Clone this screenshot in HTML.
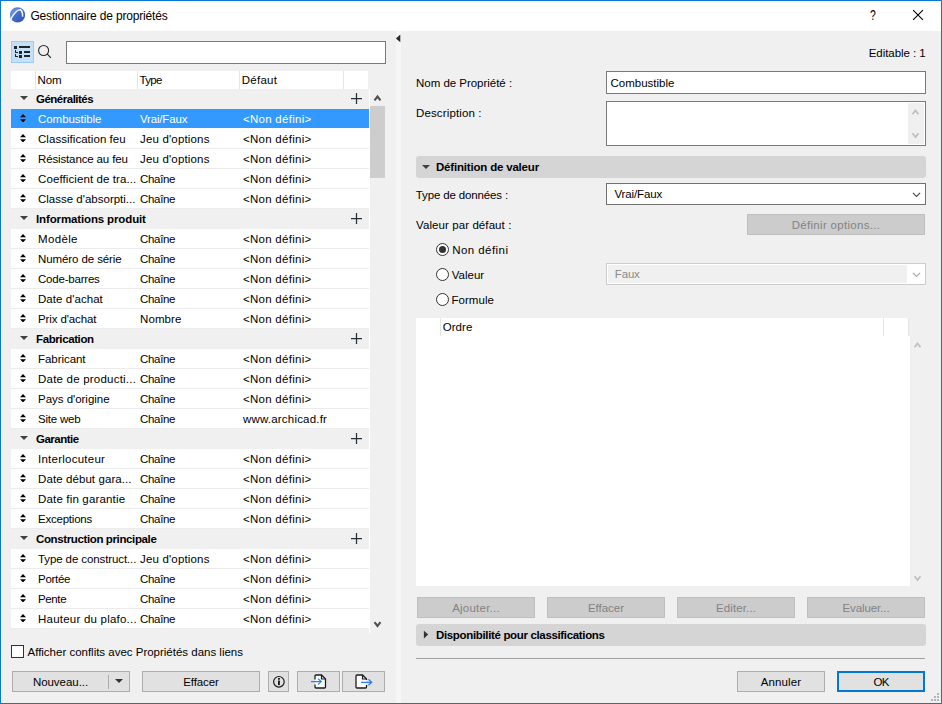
<!DOCTYPE html>
<html lang="fr">
<head>
<meta charset="utf-8">
<title>Gestionnaire de propriétés</title>
<style>
*{box-sizing:border-box;margin:0;padding:0}
html,body{width:942px;height:704px;overflow:hidden;background:#f0f0f0}
body{font-family:"Liberation Sans",sans-serif;font-size:11.5px;color:#000;position:relative}
#win *{position:absolute}
#win{position:absolute;left:0;top:0;width:942px;height:704px;background:#f0f0f0;overflow:hidden}
#frame{left:0;top:0;width:942px;height:704px;border:1px solid #0a78d7;z-index:9}
#title{left:1px;top:1px;width:940px;height:30px;background:#fff}
.lbl{white-space:nowrap;font-size:11.5px;line-height:14px}
.inp{background:#fff;border:1px solid #7a7a7a}
.btn{background:#e1e1e1;border:1px solid #adadad;text-align:center;font-size:11.5px;line-height:21px;white-space:nowrap;height:21px}
.btn.dis{background:#cccccc;border-color:#bfbfbf;color:#838383}
.sec{background:#d5d5d5;border-radius:3px;height:22px;left:416px;width:510px}
.sec b{left:20px;top:4px;font-size:11.5px;white-space:nowrap;line-height:14px}
/* table */
#hdr{left:11px;top:71px;width:357px;height:18px;background:#fff}
#hdr span{top:2px;font-size:11.5px;line-height:14px;white-space:nowrap}
#hdr i{top:0;width:1px;height:18px;background:#e5e5e5}
.row,.grow{left:11px;width:358px;height:20px;white-space:nowrap}
.row{background:#fff}
.row::after{content:"";position:absolute;left:0;bottom:0;width:358px;height:1px;background:#ececec}
.row.sel{background:#fff linear-gradient(#3399ff,#3399ff) no-repeat;background-size:358px 19px;color:#fff}
.row.sel::after{background:#fff}
.grow{background:#f0f0f0}
.grow b{left:25px;top:3px;line-height:14px;font-size:11.5px}
.tri{left:9px;top:7px;width:0;height:0;border-left:4px solid transparent;border-right:4px solid transparent;border-top:4.5px solid #404040}
.plus{left:340px;top:4px;width:11px;height:11px}
.ud{left:9.4px;top:4.8px;width:6px;height:8.5px}
.row span{top:3px;line-height:14px;font-size:11.5px}
.c1{left:27px}.c2{left:129px}.c3{left:232px}
.radio{width:13px;height:13px;border:1px solid #333;border-radius:50%;background:#fff}
.radio.on::after{content:"";position:absolute;left:2px;top:2px;width:7px;height:7px;border-radius:50%;background:#333}
.gd{width:2px;height:2px;background:#b4b4b4}
</style>
</head>
<body>
<div id="win">
  <div id="frame"></div>
  <div id="title">
    <svg style="left:8px;top:6px;width:17px;height:17px" viewBox="0 0 17 17"><defs><linearGradient id="g" x1="0" y1="0" x2="1" y2="1"><stop offset="0" stop-color="#5a86e6"/><stop offset="1" stop-color="#2a4fae"/></linearGradient></defs><circle cx="8.55" cy="7.9" r="7.6" fill="url(#g)"/><path d="M1 13.8C3.5 7.5 8 2.8 11.3 2.6C13 4 13.8 6.5 13.6 9.6" fill="none" stroke="#fff" stroke-width="1.5"/><path d="M1.2 12.5C3.5 7 8 2.6 11.3 2.6L9 1.2C5 1 1.5 4.5 1 8.5z" fill="#7ea4f0" opacity=".45"/></svg>
    <div class="lbl" style="left:29.4px;top:8px;font-size:12px"><span style="position:static;letter-spacing:-0.16px">Gestionnaire de propriétés</span></div>
    <div style="left:862px;top:6px;font-size:14px;line-height:16px;width:20px;text-align:center;transform:scaleX(0.74);transform-origin:50% 50%">?</div>
    <svg style="left:911px;top:8px;width:12px;height:12px" viewBox="0 0 12 12"><path d="M1.1 1.1L10.9 10.9M10.9 1.1L1.1 10.9" stroke="#000" stroke-width="1.1" fill="none"/></svg>
  </div>

  <!-- left toolbar -->
  <div style="left:11px;top:41px;width:23px;height:22px;background:#c5dff4;border:1px solid #9ccbf3"></div>
  <svg style="left:14px;top:46px;width:17px;height:12px" viewBox="0 0 17 12" shape-rendering="crispEdges"><g fill="#1d262b"><rect x="0" y="0" width="3" height="3"/><rect x="5" y="0" width="11" height="2"/><rect x="5" y="5" width="3" height="3"/><rect x="10" y="5" width="6" height="2"/><rect x="5" y="9" width="3" height="3"/><rect x="10" y="9" width="6" height="2"/><rect x="1" y="4" width="1" height="3"/><rect x="1" y="6" width="3" height="1"/><rect x="1" y="8" width="1" height="3"/><rect x="1" y="10" width="3" height="1"/></g></svg>
  <svg style="left:37px;top:44px;width:16px;height:16px" viewBox="0 0 16 16"><circle cx="6.6" cy="6.5" r="5" fill="none" stroke="#222c31" stroke-width="1.1"/><path d="M10.3 10.2l3.6 3.7" stroke="#222c31" stroke-width="1.2"/></svg>
  <div class="inp" style="left:66px;top:41px;width:320px;height:23px"></div>

  <!-- table -->
  <div id="hdr">
    <i style="left:24px"></i><i style="left:126px"></i><i style="left:228px"></i><i style="left:332px"></i>
    <span style="left:26.6px"><span style="position:static;letter-spacing:-0.1px">Nom</span></span><span style="left:128.6px"><span style="position:static;letter-spacing:-0.75px">Type</span></span><span style="left:230.7px"><span style="position:static;letter-spacing:0.28px">Défaut</span></span>
  </div>
<div class="grow" style="top:89px"><i class="tri"></i><b><span style="position:static;letter-spacing:-0.5px">Généralités</span></b><svg class="plus" viewBox="0 0 11 11"><path d="M5.5 0v11M0 5.5h11" stroke="#263238" stroke-width="1.25" fill="none"/></svg></div>
<div class="row sel" style="top:109px"><svg class="ud" viewBox="0 0 6 8.5"><path d="M3 0L6 3.2H0zM3 8.5L6 5.3H0z" fill="#000"/></svg><span class="c1"><span style="position:static;letter-spacing:-0.04px">Combustible</span></span><span class="c2"><span style="position:static;letter-spacing:-0.175px">Vrai/Faux</span></span><span class="c3"><span style="position:static;letter-spacing:0.273px">&lt;Non défini&gt;</span></span></div>
<div class="row" style="top:129px"><svg class="ud" viewBox="0 0 6 8.5"><path d="M3 0L6 3.2H0zM3 8.5L6 5.3H0z" fill="#000"/></svg><span class="c1"><span style="position:static;letter-spacing:0.041px">Classification feu</span></span><span class="c2"><span style="position:static;letter-spacing:0.167px">Jeu d'options</span></span><span class="c3"><span style="position:static;letter-spacing:0.273px">&lt;Non défini&gt;</span></span></div>
<div class="row" style="top:149px"><svg class="ud" viewBox="0 0 6 8.5"><path d="M3 0L6 3.2H0zM3 8.5L6 5.3H0z" fill="#000"/></svg><span class="c1"><span style="position:static;letter-spacing:-0.138px">Résistance au feu</span></span><span class="c2"><span style="position:static;letter-spacing:0.167px">Jeu d'options</span></span><span class="c3"><span style="position:static;letter-spacing:0.273px">&lt;Non défini&gt;</span></span></div>
<div class="row" style="top:169px"><svg class="ud" viewBox="0 0 6 8.5"><path d="M3 0L6 3.2H0zM3 8.5L6 5.3H0z" fill="#000"/></svg><span class="c1"><span style="position:static;letter-spacing:0.1px">Coefficient de tra...</span></span><span class="c2"><span style="position:static;letter-spacing:-0.32px">Chaîne</span></span><span class="c3"><span style="position:static;letter-spacing:0.273px">&lt;Non défini&gt;</span></span></div>
<div class="row" style="top:189px"><svg class="ud" viewBox="0 0 6 8.5"><path d="M3 0L6 3.2H0zM3 8.5L6 5.3H0z" fill="#000"/></svg><span class="c1"><span style="position:static;letter-spacing:0.0px">Classe d'absorpti...</span></span><span class="c2"><span style="position:static;letter-spacing:-0.32px">Chaîne</span></span><span class="c3"><span style="position:static;letter-spacing:0.273px">&lt;Non défini&gt;</span></span></div>
<div class="grow" style="top:209px"><i class="tri"></i><b><span style="position:static;letter-spacing:-0.132px">Informations produit</span></b><svg class="plus" viewBox="0 0 11 11"><path d="M5.5 0v11M0 5.5h11" stroke="#263238" stroke-width="1.25" fill="none"/></svg></div>
<div class="row" style="top:229px"><svg class="ud" viewBox="0 0 6 8.5"><path d="M3 0L6 3.2H0zM3 8.5L6 5.3H0z" fill="#000"/></svg><span class="c1"><span style="position:static;letter-spacing:0.36px">Modèle</span></span><span class="c2"><span style="position:static;letter-spacing:-0.32px">Chaîne</span></span><span class="c3"><span style="position:static;letter-spacing:0.273px">&lt;Non défini&gt;</span></span></div>
<div class="row" style="top:249px"><svg class="ud" viewBox="0 0 6 8.5"><path d="M3 0L6 3.2H0zM3 8.5L6 5.3H0z" fill="#000"/></svg><span class="c1"><span style="position:static;letter-spacing:-0.093px">Numéro de série</span></span><span class="c2"><span style="position:static;letter-spacing:-0.32px">Chaîne</span></span><span class="c3"><span style="position:static;letter-spacing:0.273px">&lt;Non défini&gt;</span></span></div>
<div class="row" style="top:269px"><svg class="ud" viewBox="0 0 6 8.5"><path d="M3 0L6 3.2H0zM3 8.5L6 5.3H0z" fill="#000"/></svg><span class="c1"><span style="position:static;letter-spacing:-0.21px">Code-barres</span></span><span class="c2"><span style="position:static;letter-spacing:-0.32px">Chaîne</span></span><span class="c3"><span style="position:static;letter-spacing:0.273px">&lt;Non défini&gt;</span></span></div>
<div class="row" style="top:289px"><svg class="ud" viewBox="0 0 6 8.5"><path d="M3 0L6 3.2H0zM3 8.5L6 5.3H0z" fill="#000"/></svg><span class="c1"><span style="position:static;letter-spacing:0.055px">Date d'achat</span></span><span class="c2"><span style="position:static;letter-spacing:-0.32px">Chaîne</span></span><span class="c3"><span style="position:static;letter-spacing:0.273px">&lt;Non défini&gt;</span></span></div>
<div class="row" style="top:309px"><svg class="ud" viewBox="0 0 6 8.5"><path d="M3 0L6 3.2H0zM3 8.5L6 5.3H0z" fill="#000"/></svg><span class="c1"><span style="position:static;letter-spacing:-0.109px">Prix d'achat</span></span><span class="c2"><span style="position:static;letter-spacing:0.1px">Nombre</span></span><span class="c3"><span style="position:static;letter-spacing:0.273px">&lt;Non défini&gt;</span></span></div>
<div class="grow" style="top:329px"><i class="tri"></i><b><span style="position:static;letter-spacing:-0.39px">Fabrication</span></b><svg class="plus" viewBox="0 0 11 11"><path d="M5.5 0v11M0 5.5h11" stroke="#263238" stroke-width="1.25" fill="none"/></svg></div>
<div class="row" style="top:349px"><svg class="ud" viewBox="0 0 6 8.5"><path d="M3 0L6 3.2H0zM3 8.5L6 5.3H0z" fill="#000"/></svg><span class="c1"><span style="position:static;letter-spacing:-0.05px">Fabricant</span></span><span class="c2"><span style="position:static;letter-spacing:-0.32px">Chaîne</span></span><span class="c3"><span style="position:static;letter-spacing:0.273px">&lt;Non défini&gt;</span></span></div>
<div class="row" style="top:369px"><svg class="ud" viewBox="0 0 6 8.5"><path d="M3 0L6 3.2H0zM3 8.5L6 5.3H0z" fill="#000"/></svg><span class="c1"><span style="position:static;letter-spacing:0.217px">Date de producti...</span></span><span class="c2"><span style="position:static;letter-spacing:-0.32px">Chaîne</span></span><span class="c3"><span style="position:static;letter-spacing:0.273px">&lt;Non défini&gt;</span></span></div>
<div class="row" style="top:389px"><svg class="ud" viewBox="0 0 6 8.5"><path d="M3 0L6 3.2H0zM3 8.5L6 5.3H0z" fill="#000"/></svg><span class="c1"><span style="position:static;letter-spacing:-0.023px">Pays d'origine</span></span><span class="c2"><span style="position:static;letter-spacing:-0.32px">Chaîne</span></span><span class="c3"><span style="position:static;letter-spacing:0.273px">&lt;Non défini&gt;</span></span></div>
<div class="row" style="top:409px"><svg class="ud" viewBox="0 0 6 8.5"><path d="M3 0L6 3.2H0zM3 8.5L6 5.3H0z" fill="#000"/></svg><span class="c1"><span style="position:static;letter-spacing:-0.214px">Site web</span></span><span class="c2"><span style="position:static;letter-spacing:-0.32px">Chaîne</span></span><span class="c3"><span style="position:static;letter-spacing:0.193px">www.archicad.fr</span></span></div>
<div class="grow" style="top:429px"><i class="tri"></i><b><span style="position:static;letter-spacing:-0.5px">Garantie</span></b><svg class="plus" viewBox="0 0 11 11"><path d="M5.5 0v11M0 5.5h11" stroke="#263238" stroke-width="1.25" fill="none"/></svg></div>
<div class="row" style="top:449px"><svg class="ud" viewBox="0 0 6 8.5"><path d="M3 0L6 3.2H0zM3 8.5L6 5.3H0z" fill="#000"/></svg><span class="c1"><span style="position:static;letter-spacing:0.25px">Interlocuteur</span></span><span class="c2"><span style="position:static;letter-spacing:-0.32px">Chaîne</span></span><span class="c3"><span style="position:static;letter-spacing:0.273px">&lt;Non défini&gt;</span></span></div>
<div class="row" style="top:469px"><svg class="ud" viewBox="0 0 6 8.5"><path d="M3 0L6 3.2H0zM3 8.5L6 5.3H0z" fill="#000"/></svg><span class="c1"><span style="position:static;letter-spacing:0.088px">Date début gara...</span></span><span class="c2"><span style="position:static;letter-spacing:-0.32px">Chaîne</span></span><span class="c3"><span style="position:static;letter-spacing:0.273px">&lt;Non défini&gt;</span></span></div>
<div class="row" style="top:489px"><svg class="ud" viewBox="0 0 6 8.5"><path d="M3 0L6 3.2H0zM3 8.5L6 5.3H0z" fill="#000"/></svg><span class="c1"><span style="position:static;letter-spacing:0.169px">Date fin garantie</span></span><span class="c2"><span style="position:static;letter-spacing:-0.32px">Chaîne</span></span><span class="c3"><span style="position:static;letter-spacing:0.273px">&lt;Non défini&gt;</span></span></div>
<div class="row" style="top:509px"><svg class="ud" viewBox="0 0 6 8.5"><path d="M3 0L6 3.2H0zM3 8.5L6 5.3H0z" fill="#000"/></svg><span class="c1"><span style="position:static;letter-spacing:-0.222px">Exceptions</span></span><span class="c2"><span style="position:static;letter-spacing:-0.32px">Chaîne</span></span><span class="c3"><span style="position:static;letter-spacing:0.273px">&lt;Non défini&gt;</span></span></div>
<div class="grow" style="top:529px"><i class="tri"></i><b><span style="position:static;letter-spacing:-0.377px">Construction principale</span></b><svg class="plus" viewBox="0 0 11 11"><path d="M5.5 0v11M0 5.5h11" stroke="#263238" stroke-width="1.25" fill="none"/></svg></div>
<div class="row" style="top:549px"><svg class="ud" viewBox="0 0 6 8.5"><path d="M3 0L6 3.2H0zM3 8.5L6 5.3H0z" fill="#000"/></svg><span class="c1"><span style="position:static;letter-spacing:-0.105px">Type de construct...</span></span><span class="c2"><span style="position:static;letter-spacing:0.167px">Jeu d'options</span></span><span class="c3"><span style="position:static;letter-spacing:0.273px">&lt;Non défini&gt;</span></span></div>
<div class="row" style="top:569px"><svg class="ud" viewBox="0 0 6 8.5"><path d="M3 0L6 3.2H0zM3 8.5L6 5.3H0z" fill="#000"/></svg><span class="c1"><span style="position:static;letter-spacing:-0.28px">Portée</span></span><span class="c2"><span style="position:static;letter-spacing:-0.32px">Chaîne</span></span><span class="c3"><span style="position:static;letter-spacing:0.273px">&lt;Non défini&gt;</span></span></div>
<div class="row" style="top:589px"><svg class="ud" viewBox="0 0 6 8.5"><path d="M3 0L6 3.2H0zM3 8.5L6 5.3H0z" fill="#000"/></svg><span class="c1"><span style="position:static;letter-spacing:-0.375px">Pente</span></span><span class="c2"><span style="position:static;letter-spacing:-0.32px">Chaîne</span></span><span class="c3"><span style="position:static;letter-spacing:0.273px">&lt;Non défini&gt;</span></span></div>
<div class="row" style="top:609px"><svg class="ud" viewBox="0 0 6 8.5"><path d="M3 0L6 3.2H0zM3 8.5L6 5.3H0z" fill="#000"/></svg><span class="c1"><span style="position:static;letter-spacing:0.222px">Hauteur du plafo...</span></span><span class="c2"><span style="position:static;letter-spacing:-0.32px">Chaîne</span></span><span class="c3"><span style="position:static;letter-spacing:0.273px">&lt;Non défini&gt;</span></span></div>
  <div style="left:369px;top:89px;width:1px;height:544px;background:#fff"></div>
  <!-- left scrollbar -->
  <div style="left:370px;top:89px;width:16px;height:542px;background:#f0f0f0"></div>
  <div style="left:370px;top:106px;width:15px;height:72px;background:#cdcdcd"></div>
  <svg style="left:373px;top:94px;width:9px;height:7px" viewBox="0 0 9 7"><path d="M1.5 6.3L4.5 2.5L7.5 6.3" stroke="#505050" stroke-width="2.1" fill="none"/></svg>
  <svg style="left:373px;top:621.3px;width:9px;height:7px" viewBox="0 0 9 7"><path d="M1.5 1.2L4.5 5L7.5 1.2" stroke="#505050" stroke-width="2.1" fill="none"/></svg>

  <!-- checkbox -->
  <div style="left:11px;top:645px;width:13px;height:13px;background:#fff;border:1px solid #333"></div>
  <div class="lbl" style="left:27.5px;top:645px"><span style="position:static;letter-spacing:-0.009px">Afficher conflits avec Propriétés dans liens</span></div>

  <!-- left buttons -->
  <div class="btn" style="left:12px;top:671px;width:118px"><span style="left:0;top:0;width:95px;text-align:center"><span style="position:static;letter-spacing:-0.044px">Nouveau...</span></span><i style="left:95px;top:3px;width:1px;height:14px;background:#adadad"></i><i style="left:102px;top:7px;width:0;height:0;border-left:4px solid transparent;border-right:4px solid transparent;border-top:4px solid #333"></i></div>
  <div class="btn" style="left:142px;top:671px;width:118px"><span style="position:static;letter-spacing:-0.1px">Effacer</span></div>
  <div class="btn" style="left:268px;top:671px;width:21px"><svg style="left:0;top:0;width:19px;height:19px" viewBox="0 0 19 19"><circle cx="9.9" cy="9.8" r="5.3" fill="none" stroke="#1c1c1c" stroke-width="1.2"/><rect x="9" y="8.5" width="1.9" height="4.6" fill="#1c1c1c"/><rect x="9" y="6" width="1.9" height="1.7" fill="#1c1c1c"/></svg></div>
  <div class="btn" style="left:297px;top:671px;width:43px"><svg style="left:0;top:0;width:41px;height:19px" viewBox="0 0 41 19"><path d="M17 7.5V4Q17 3 18 3H23.5L27.5 7V15Q27.5 16 26.5 16H18Q17 16 17 15V12.5" fill="#fff" stroke="#1c1c1c" stroke-width="1.3"/><path d="M23.5 3V7H27.5" fill="none" stroke="#1c1c1c" stroke-width="1.2"/><path d="M13 9.6H23M20 6.6L23.2 9.6L20 12.6" fill="none" stroke="#2b7cf0" stroke-width="1.2"/></svg></div>
  <div class="btn" style="left:342px;top:671px;width:43px"><svg style="left:0;top:0;width:41px;height:19px" viewBox="0 0 41 19"><path d="M23.5 8V7L19.5 3H14Q13 3 13 4V15Q13 16 14 16H22.5Q23.5 16 23.5 15V13" fill="#fff" stroke="#1c1c1c" stroke-width="1.3"/><path d="M19.5 3V7H23.5" fill="none" stroke="#1c1c1c" stroke-width="1.2"/><path d="M18 10.3H28.5M25.5 7.3L28.7 10.3L25.5 13.3" fill="none" stroke="#2b7cf0" stroke-width="1.2"/></svg></div>

  <!-- splitter -->
  <div style="left:396px;top:31px;width:5px;height:672px;background:#f6f6f6"></div>
  <svg style="left:395px;top:34px;width:6px;height:9px" viewBox="0 0 6 9"><path d="M0.9 4.4L5.3 0.6V8.2z" fill="#2b2b2b"/></svg>

  <!-- right panel -->
  <div class="lbl" style="right:16.3px;top:46px"><span style="position:static;letter-spacing:-0.045px">Editable : 1</span></div>
  <div class="lbl" style="left:416px;top:76px"><span style="position:static;letter-spacing:-0.024px">Nom de Propriété :</span></div>
  <div class="inp" style="left:606px;top:71px;width:320px;height:23px"><span class="lbl" style="left:3.5px;top:4px"><span style="position:static;letter-spacing:0.0px">Combustible</span></span></div>
  <div class="lbl" style="left:416px;top:106px"><span style="position:static;letter-spacing:0.133px">Description :</span></div>
  <div class="inp" style="left:606px;top:101px;width:320px;height:45px">
    <div style="right:1px;top:1px;width:16px;height:41px;background:#f0f0f0"></div>
    <svg style="right:5px;top:6px;width:9px;height:7px" viewBox="0 0 9 7"><path d="M1.5 6.3L4.5 2.5L7.5 6.3" stroke="#bfbfbf" stroke-width="1.8" fill="none"/></svg>
    <svg style="right:5px;top:30.2px;width:9px;height:7px" viewBox="0 0 9 7"><path d="M1.5 1.2L4.5 5L7.5 1.2" stroke="#bfbfbf" stroke-width="1.8" fill="none"/></svg>
  </div>

  <div class="sec" style="top:156px"><i class="tri" style="left:6px;top:9px;border-top-width:4px"></i><b><span style="position:static;letter-spacing:-0.189px">Définition de valeur</span></b></div>

  <div class="lbl" style="left:415.8px;top:188px"><span style="position:static;letter-spacing:-0.138px">Type de données :</span></div>
  <div class="inp" style="left:606px;top:183px;width:320px;height:22px;border-color:#707070"><span class="lbl" style="left:7.4px;top:3px"><span style="position:static;letter-spacing:-0.125px">Vrai/Faux</span></span>
    <svg style="left:305.4px;top:8px;width:9px;height:6px" viewBox="0 0 9 6"><path d="M0.9 0.9L4.5 4.5L8.1 0.9" stroke="#4a4a4a" stroke-width="1.15" fill="none"/></svg></div>

  <div class="lbl" style="left:416px;top:218px"><span style="position:static;letter-spacing:0.089px">Valeur par défaut :</span></div>
  <div class="btn dis" style="left:747px;top:214px;width:178px"><span style="position:static;letter-spacing:0.306px">Définir options...</span></div>

  <div class="radio on" style="left:436px;top:243px"></div><div class="lbl" style="left:452.2px;top:243px"><span style="position:static;letter-spacing:0.444px">Non défini</span></div>
  <div class="radio" style="left:436px;top:268px"></div><div class="lbl" style="left:451.8px;top:268px"><span style="position:static;letter-spacing:0.0px">Valeur</span></div>
  <div class="radio" style="left:436px;top:293px"></div><div class="lbl" style="left:451.5px;top:293px"><span style="position:static;letter-spacing:0.033px">Formule</span></div>

  <div style="left:606px;top:263px;width:320px;height:22px;background:#fff;border:1px solid #cccccc">
    <div style="left:1px;top:1px;width:299px;height:18px;background:#f0f0f0"></div>
    <span class="lbl" style="left:7.8px;top:3px;color:#8a8a8a"><span style="position:static;letter-spacing:-0.167px">Faux</span></span>
    <svg style="left:305.4px;top:8px;width:9px;height:6px" viewBox="0 0 9 6"><path d="M0.9 0.9L4.5 4.5L8.1 0.9" stroke="#a6a6a6" stroke-width="1.15" fill="none"/></svg></div>

  <!-- order list -->
  <div style="left:416px;top:336px;width:494px;height:250px;background:#fff"></div>
  <div style="left:416px;top:318px;width:493px;height:18px;background:#fff">
    <i style="left:24px;top:0;width:1px;height:18px;background:#e5e5e5"></i><i style="left:467px;top:0;width:1px;height:18px;background:#e5e5e5"></i><i style="left:492px;top:0;width:1px;height:18px;background:#e5e5e5"></i>
    <span class="lbl" style="left:26.7px;top:2px"><span style="position:static;letter-spacing:0.075px">Ordre</span></span></div>
  <svg style="left:913px;top:341px;width:9px;height:7px" viewBox="0 0 9 7"><path d="M1.5 6.3L4.5 2.5L7.5 6.3" stroke="#bfbfbf" stroke-width="1.8" fill="none"/></svg>
  <svg style="left:913px;top:574.5px;width:9px;height:7px" viewBox="0 0 9 7"><path d="M1.5 1.2L4.5 5L7.5 1.2" stroke="#bfbfbf" stroke-width="1.8" fill="none"/></svg>

  <div class="btn dis" style="left:417px;top:597px;width:118px"><span style="position:static;letter-spacing:0.222px">Ajouter...</span></div>
  <div class="btn dis" style="left:547px;top:597px;width:118px"><span style="position:static;letter-spacing:0.0px">Effacer</span></div>
  <div class="btn dis" style="left:677px;top:597px;width:118px"><span style="position:static;letter-spacing:0.125px">Editer...</span></div>
  <div class="btn dis" style="left:807px;top:597px;width:118px"><span style="position:static;letter-spacing:-0.089px">Evaluer...</span></div>

  <div class="sec" style="top:624px"><svg style="left:7px;top:6px;width:7px;height:9px" viewBox="0 0 7 9"><path d="M0.9 0.7V8.4L5.2 4.55z" fill="#333"/></svg><b><span style="position:static;letter-spacing:-0.342px">Disponibilité pour classifications</span></b></div>

  <div style="left:416px;top:658px;width:509px;height:1px;background:#a0a0a0"></div>
  <div class="btn" style="left:737px;top:671px;width:88px"><span style="position:static;letter-spacing:0.133px">Annuler</span></div>
  <div class="btn" style="left:837px;top:671px;width:88px;border:2px solid #0078d7;line-height:19px"><span style="position:static;letter-spacing:-0.75px">OK</span></div>

  <i class="gd" style="left:937px;top:693px"></i>
  <i class="gd" style="left:934px;top:696px"></i><i class="gd" style="left:937px;top:696px"></i>
  <i class="gd" style="left:931px;top:699px"></i><i class="gd" style="left:934px;top:699px"></i><i class="gd" style="left:937px;top:699px"></i>
</div>
</body>
</html>
